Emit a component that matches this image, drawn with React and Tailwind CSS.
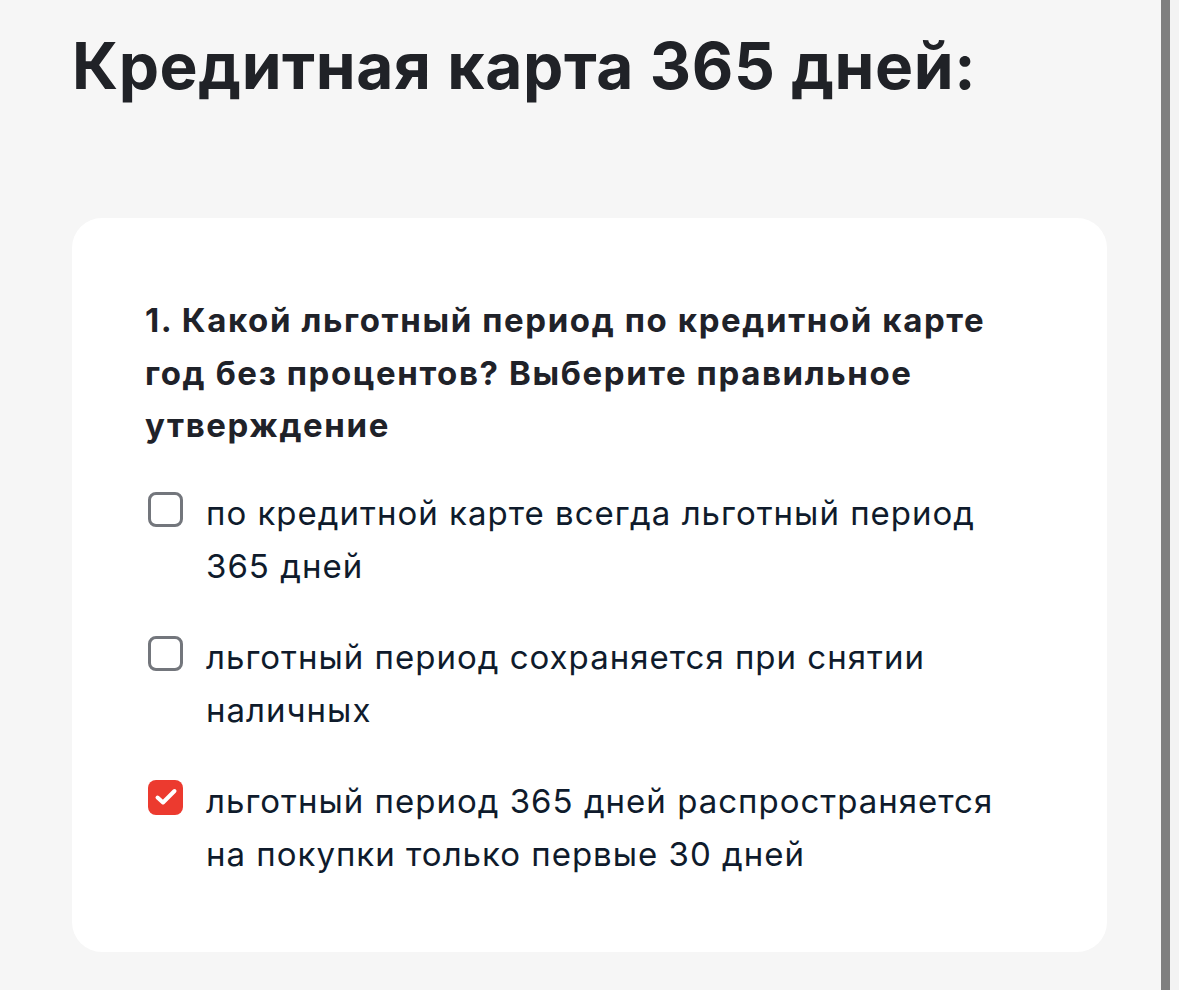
import React from "react";

const options = [
  { text: "по кредитной карте всегда льготный период 365 дней", checked: false },
  { text: "льготный период сохраняется при снятии наличных", checked: false },
  { text: "льготный период 365 дней распространяется на покупки только первые 30 дней", checked: true },
];

function Box({ checked }) {
  if (checked) {
    return (
      <div className="mt-[5px] flex h-[35px] w-[35px] shrink-0 items-center justify-center rounded-[8px] bg-[#ec3a2f]">
        <svg width="24" height="24" viewBox="0 0 24 24" fill="none">
          <path d="M3.5 12.5l5.5 5L20.5 6" stroke="white" strokeWidth="4" strokeLinecap="round" strokeLinejoin="round" />
        </svg>
      </div>
    );
  }
  return <div className="mt-[5px] h-[35px] w-[35px] shrink-0 rounded-[8px] border-[3px] border-[#73767c] bg-white" />;
}

export default function App() {
  return (
    <div className="flex min-h-[990px] w-full bg-[#f6f6f6]" style={{ fontFamily: "Inter, 'Noto Sans', sans-serif" }}>
      <div className="w-[1161px] shrink-0 pl-[72px] pr-[54px]">
        <h1 className="pt-[28px] text-[64px] font-bold leading-[76px] tracking-[0.6px] text-[#202227]">
          Кредитная карта 365 дней:
        </h1>
        <div className="mt-[114px] rounded-[30px] bg-white pb-[71px] pl-[73px] pr-[100px] pt-[76px]">
          <p className="text-[33px] font-bold leading-[52.5px] tracking-[1.6px] text-[#1f2229]">
            1. Какой льготный период по кредитной карте год без процентов? Выберите правильное утверждение
          </p>
          <div className="mt-[35px] flex flex-col gap-[38px]">
            {options.map((o, i) => (
              <div key={i} className="flex items-start gap-[23px] pl-[3px]">
                <Box checked={o.checked} />
                <span className="text-[33px] font-normal leading-[53px] tracking-[1px] text-[#0f1b2c]">{o.text}</span>
              </div>
            ))}
          </div>
        </div>
      </div>
      <div className="w-[9px] shrink-0 bg-[#7f7f7f]" />
      <div className="flex-1 bg-[#f3f3f3]" />
    </div>
  );
}
